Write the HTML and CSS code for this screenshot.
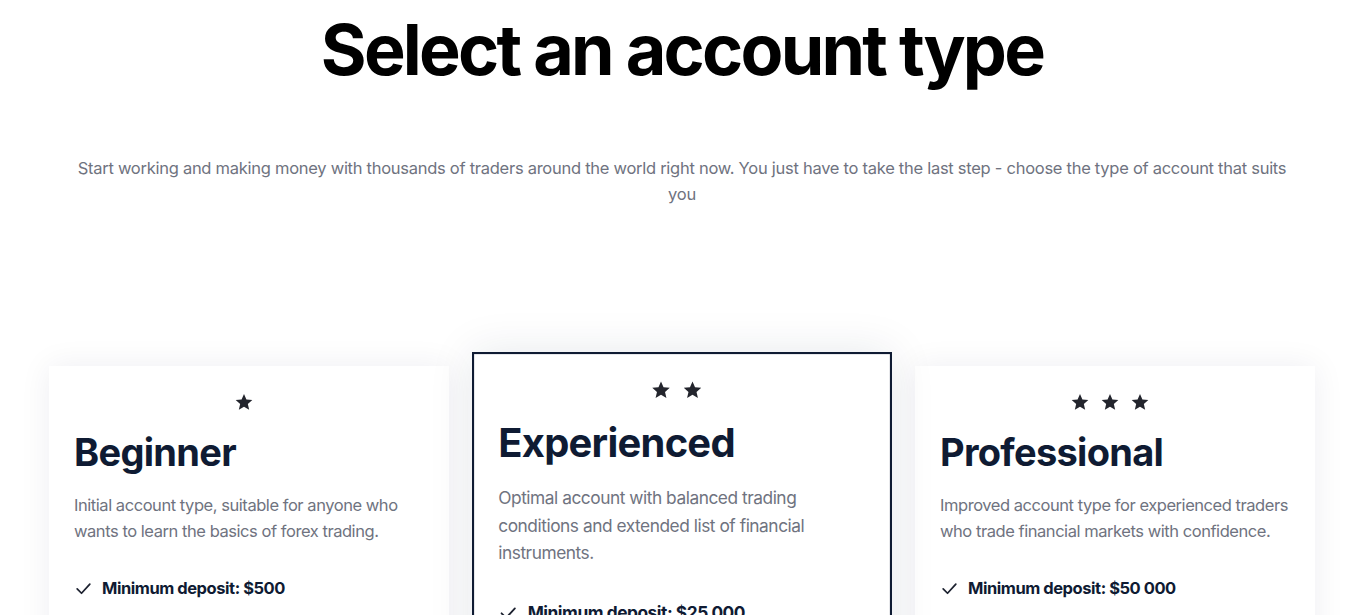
FILE: index.html
```html
<!DOCTYPE html>
<html lang="en">
<head>
<meta charset="utf-8">
<title>Select an account type</title>
<link rel="stylesheet" href="styles.css">
</head>
<body>
<main class="page">
  <header class="intro">
    <h1 class="title">Select an account type</h1>
    <p class="lead">Start working and making money with thousands of traders around the world right now. You just have to take the last step - choose the type of account that suits you</p>
  </header>

  <section class="plans">
    <article class="card">
      <div class="stars">
        <svg class="star" viewBox="0 0 24 24"><path d="M12 2.5l2.9 6.6 7.1.6-5.4 4.7 1.6 7-6.2-3.7-6.2 3.7 1.6-7L2 9.7l7.1-.6z"/></svg>
      </div>
      <h2 class="card-title">Beginner</h2>
      <p class="card-text">Initial account type, suitable for anyone who wants to learn the basics of forex trading.</p>
      <ul class="features">
        <li class="feature"><svg class="check" viewBox="0 0 24 24"><polyline points="4 12.5 9.5 18 20 6.5"/></svg>Minimum deposit: $500</li>
        <li class="feature"><svg class="check" viewBox="0 0 24 24"><polyline points="4 12.5 9.5 18 20 6.5"/></svg>Leverage: up to 1:100</li>
        <li class="feature"><svg class="check" viewBox="0 0 24 24"><polyline points="4 12.5 9.5 18 20 6.5"/></svg>Spread: from 1.5 pips</li>
      </ul>
    </article>

    <article class="card card--featured">
      <div class="stars">
        <svg class="star" viewBox="0 0 24 24"><path d="M12 2.5l2.9 6.6 7.1.6-5.4 4.7 1.6 7-6.2-3.7-6.2 3.7 1.6-7L2 9.7l7.1-.6z"/></svg>
        <svg class="star" viewBox="0 0 24 24"><path d="M12 2.5l2.9 6.6 7.1.6-5.4 4.7 1.6 7-6.2-3.7-6.2 3.7 1.6-7L2 9.7l7.1-.6z"/></svg>
      </div>
      <h2 class="card-title">Experienced</h2>
      <p class="card-text">Optimal account with balanced trading conditions and extended list of financial instruments.</p>
      <ul class="features">
        <li class="feature"><svg class="check" viewBox="0 0 24 24"><polyline points="4 12.5 9.5 18 20 6.5"/></svg>Minimum deposit: $25 000</li>
        <li class="feature"><svg class="check" viewBox="0 0 24 24"><polyline points="4 12.5 9.5 18 20 6.5"/></svg>Leverage: up to 1:200</li>
        <li class="feature"><svg class="check" viewBox="0 0 24 24"><polyline points="4 12.5 9.5 18 20 6.5"/></svg>Spread: from 1.0 pips</li>
      </ul>
    </article>

    <article class="card">
      <div class="stars">
        <svg class="star" viewBox="0 0 24 24"><path d="M12 2.5l2.9 6.6 7.1.6-5.4 4.7 1.6 7-6.2-3.7-6.2 3.7 1.6-7L2 9.7l7.1-.6z"/></svg>
        <svg class="star" viewBox="0 0 24 24"><path d="M12 2.5l2.9 6.6 7.1.6-5.4 4.7 1.6 7-6.2-3.7-6.2 3.7 1.6-7L2 9.7l7.1-.6z"/></svg>
        <svg class="star" viewBox="0 0 24 24"><path d="M12 2.5l2.9 6.6 7.1.6-5.4 4.7 1.6 7-6.2-3.7-6.2 3.7 1.6-7L2 9.7l7.1-.6z"/></svg>
      </div>
      <h2 class="card-title">Professional</h2>
      <p class="card-text">Improved account type for experienced traders who trade financial markets with confidence.</p>
      <ul class="features">
        <li class="feature"><svg class="check" viewBox="0 0 24 24"><polyline points="4 12.5 9.5 18 20 6.5"/></svg>Minimum deposit: $50 000</li>
        <li class="feature"><svg class="check" viewBox="0 0 24 24"><polyline points="4 12.5 9.5 18 20 6.5"/></svg>Leverage: up to 1:500</li>
        <li class="feature"><svg class="check" viewBox="0 0 24 24"><polyline points="4 12.5 9.5 18 20 6.5"/></svg>Spread: from 0.5 pips</li>
      </ul>
    </article>
  </section>
</main>
</body>
</html>
```

FILE: styles.css
```css
* { box-sizing: border-box; }

html, body {
  margin: 0;
  padding: 0;
  background: #ffffff;
  font-family: "Inter", "Noto Sans", sans-serif;
  color: #0f1b33;
  overflow: hidden;
}

.page {
  padding: 0 38px 0 49px;
}

.intro {
  display: flex;
  flex-direction: column;
  align-items: center;
}

.title {
  margin: 7px 0 0;
  font-size: 70px;
  line-height: 86px;
  font-weight: 700;
  letter-spacing: -2.75px;
  color: #000000;
}

.lead {
  margin: 62px 0 0;
  padding: 0 20px;
  font-size: 16.5px;
  line-height: 26px;
  font-weight: 400;
  letter-spacing: -0.27px;
  color: #6f7380;
  text-align: center;
}

.plans {
  margin-top: 159px;
  display: grid;
  grid-template-columns: repeat(3, 1fr);
  gap: 33px;
  align-items: start;
}

.card {
  background: #ffffff;
  min-height: 560px;
  padding: 26px 20px 25px 25px;
  box-shadow: 0 0 30px rgba(20, 35, 70, 0.07);
}

.card--featured {
  border: 2px solid #0f1b33;
  padding: 24px 18px 23px 23px;
  transform: scale(1.05);
  box-shadow: 0 0 40px rgba(20, 35, 70, 0.10);
}

.stars {
  display: flex;
  justify-content: center;
  height: 20px;
  padding-right: 5px;
}

.star {
  width: 20px;
  height: 20px;
  margin-right: 10px;
  fill: #23252d;
}

.card-title {
  margin: 17px 0 0;
  font-size: 38px;
  line-height: 46px;
  font-weight: 700;
  letter-spacing: -0.7px;
  color: #0f1b33;
}

.card-text {
  margin: 17px 0 0;
  font-size: 16.5px;
  line-height: 26px;
  letter-spacing: -0.45px;
  color: #6f7380;
}

.features {
  list-style: none;
  margin: 32px 0 0;
  padding: 0;
  display: flex;
  flex-direction: column;
  gap: 18px;
}

.feature {
  display: flex;
  align-items: center;
  gap: 9px;
  font-size: 16.5px;
  line-height: 24px;
  font-weight: 700;
  letter-spacing: -0.45px;
  color: #0f1b33;
}

.check {
  width: 19px;
  height: 19px;
  flex: none;
  fill: none;
  stroke: #1d2230;
  stroke-width: 2.2;
  stroke-linecap: round;
  stroke-linejoin: round;
}
```
